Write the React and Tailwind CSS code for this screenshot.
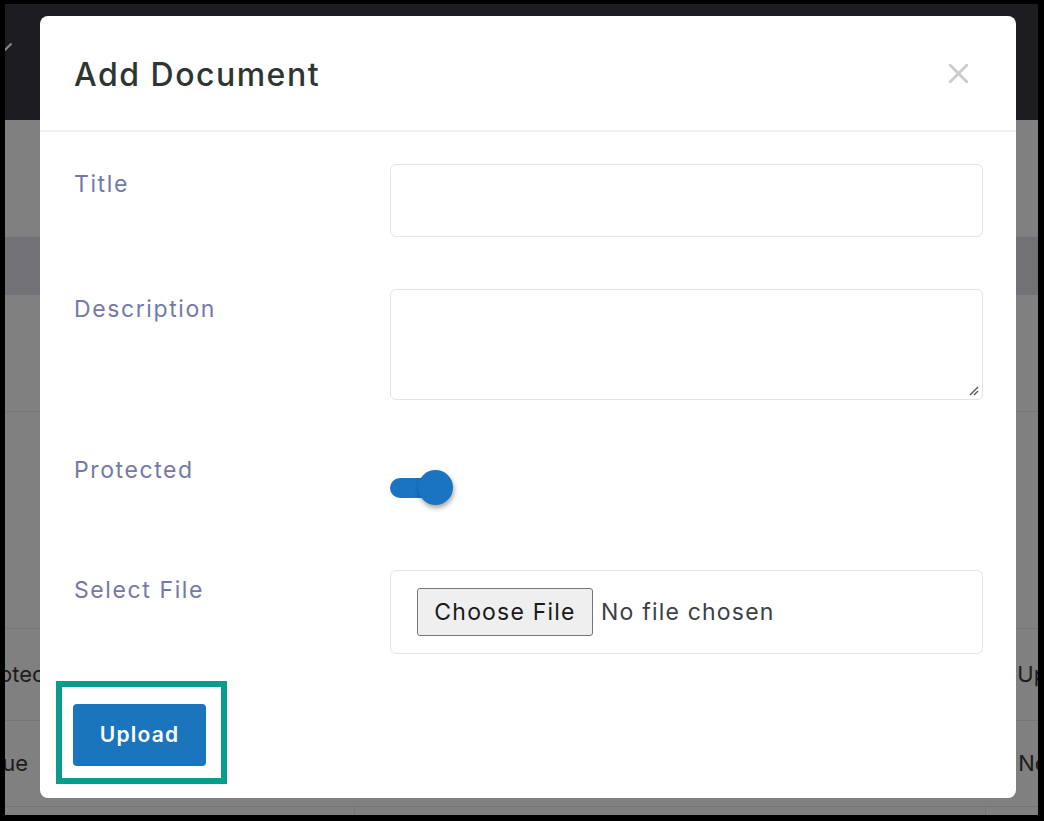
import { X } from 'lucide-react';

const font = { fontFamily: 'Inter, "Open Sans", sans-serif' };

function Field({ label, children, labelPad = 'pt-[5px]', className = '' }) {
  return (
    <div className={`flex ${className}`}>
      <div className={`w-[316px] shrink-0 text-[23px] leading-[30px] tracking-[1.6px] text-[#7479aa] ${labelPad}`}>{label}</div>
      <div className="flex-1">{children}</div>
    </div>
  );
}

export default function App() {
  return (
    <div className="w-[1044px] h-[821px] bg-black pl-[5px] pr-[6px] pt-[4px] pb-[6px] overflow-hidden font-['Inter',sans-serif]">
      <div className="relative w-full h-full overflow-hidden bg-[#808080]">
        {/* page behind the dimmed overlay */}
        <div className="h-[116px] bg-[#1c1c21] relative">
          <div className="absolute left-[2px] top-[38px] w-[2px] h-[10px] bg-[#8a8a8a] rotate-45" />
        </div>
        <div className="h-[117px]" />
        <div className="h-[58px] bg-[#727276]" />
        <div className="h-[117px] border-b border-[#747474]" />
        <div className="h-[217px] border-b border-[#747474]" />
        <div className="h-[92px] border-b border-[#747474] flex items-center justify-between text-[22px] text-[#1c1c1c]">
          <span className="ml-[-28px]">Protected</span>
          <span className="mr-[-80px]">Uploaded</span>
        </div>
        <div className="h-[86px] border-b border-[#747474] flex items-center justify-between text-[22px] text-[#1c1c1c]">
          <span className="ml-[-24px]">True</span>
          <span className="mr-[-10px]">No</span>
        </div>
        <div className="flex h-[20px]">
          <div className="w-[350px] border-r border-[#747474]" />
          <div className="flex-1" />
          <div className="w-[53px] border-l border-[#747474]" />
        </div>

        {/* modal */}
        <div className="absolute left-[35px] top-[12px] w-[976px] h-[782px] bg-white rounded-[8px]" style={font}>
          <div className="h-[116px] border-b-2 border-[#eef0f6] flex items-center justify-between pl-[34px] pr-[41px]">
            <h2 className="text-[32px] font-medium text-[#2e3533] tracking-[1.5px] pt-[3px]">Add Document</h2>
            <X className="w-[33px] h-[33px] text-[#cbcbcb]" strokeWidth={2} />
          </div>
          <div className="pl-[34px] pr-[33px] pt-[32px] relative">
            <Field label="Title" className="mb-[52px]">
              <div className="h-[73px] border border-[#e2e4ec] rounded-[6px]" />
            </Field>
            <Field label="Description" className="mb-[51px]">
              <div className="h-[111px] border border-[#e2e4ec] rounded-[6px] relative">
                <svg className="absolute right-[3px] bottom-[3px]" width="12" height="12" viewBox="0 0 12 12">
                  <path d="M11 3 L3 11 M11 7 L7 11" stroke="#555" strokeWidth="1.4" />
                </svg>
              </div>
            </Field>
            <Field label="Protected" labelPad="pt-[4px]" className="h-[68px] mb-[51px]">
              <div className="pt-[19px]">
                <div className="relative w-[65px] h-[35px]">
                  <div className="absolute left-0 top-[8px] w-[54px] h-[20px] rounded-full bg-[#1b74c1]" />
                  <div className="absolute left-[28px] top-0 w-[35px] h-[35px] rounded-full bg-[#1b74c1] shadow-[1px_3px_5px_rgba(0,0,0,0.35)]" />
                </div>
              </div>
            </Field>
            <Field label="Select File" className="mb-[50px]">
              <div className="h-[84px] border border-[#e2e4ec] rounded-[6px] flex items-center pl-[26px] gap-[8px]">
                <button className="h-[48px] w-[176px] bg-[#efefef] border border-[#767676] rounded-[3px] text-[23px] tracking-[1.2px] text-[#1a1a1a]">
                  Choose File
                </button>
                <span className="text-[23px] tracking-[1.2px] text-[#3d4046]">No file chosen</span>
              </div>
            </Field>
            <div className="relative">
              <button className="ml-[-1px] w-[133px] h-[62px] rounded-[4px] bg-[#1b75bc] text-white text-[21px] font-semibold tracking-[1.2px]">
                Upload
              </button>
              <div className="absolute left-[-18px] top-[-23px] w-[171px] h-[103px] border-[6px] border-[#0a9b8b]" />
            </div>
          </div>
        </div>
      </div>
    </div>
  );
}
